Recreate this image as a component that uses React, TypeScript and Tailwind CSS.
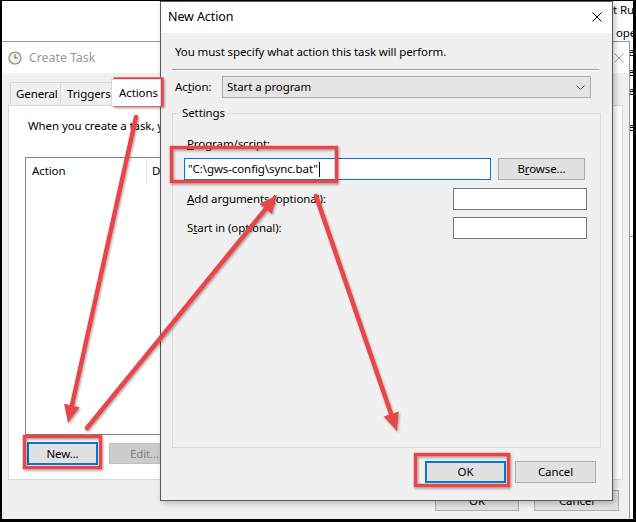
import React from 'react';

type Pt = { x1: number; y1: number; x2: number; y2: number };

const RED = '#e8474a';

// red arrow with a filled head at (x2, y2)
const Arrow: React.FC<Pt> = ({ x1, y1, x2, y2 }) => {
  const dx = x2 - x1;
  const dy = y2 - y1;
  const len = Math.hypot(dx, dy);
  const ux = dx / len;
  const uy = dy / len;
  const bx = x2 - ux * 18;
  const by = y2 - uy * 18;
  const nx = -uy * 8;
  const ny = ux * 8;
  return (
    <g>
      <line x1={x1} y1={y1} x2={bx + ux * 2} y2={by + uy * 2} stroke={RED} strokeWidth={4.5} strokeLinecap="round" />
      <polygon points={`${x2},${y2} ${bx + nx},${by + ny} ${bx - nx},${by - ny}`} fill={RED} />
    </g>
  );
};

const Annotations = () => (
  <svg className="pointer-events-none absolute left-0 top-0" width={636} height={522}>
    <defs>
      <filter id="sh" x="-20%" y="-20%" width="140%" height="140%">
        <feDropShadow dx="1" dy="1.5" stdDeviation="1.2" floodColor="#000" floodOpacity="0.35" />
      </filter>
    </defs>
    <g filter="url(#sh)" fill="none" stroke={RED} strokeWidth={3.5}>
      <rect x={115} y={79} width={47} height={26} />
      <rect x={171.5} y={147.5} width={165} height={34} />
      <rect x={24.5} y={436.5} width={76} height={31} />
      <rect x={415.5} y={454.5} width={93} height={31} />
    </g>
    <g filter="url(#sh)">
      <Arrow x1={136} y1={117} x2={68} y2={423} />
      <Arrow x1={87} y1={428} x2={277} y2={195} />
      <Arrow x1={316} y1={196} x2={397} y2={431} />
    </g>
  </svg>
);

const CloseX = ({ color = '#000' }: { color?: string }) => (
  <svg width="10" height="10" viewBox="0 0 10 10" className="shrink-0">
    <path d="M0.5 0.5 L9.5 9.5 M9.5 0.5 L0.5 9.5" stroke={color} strokeWidth="1" />
  </svg>
);

const ClockIcon = () => (
  <svg width="14" height="14" viewBox="0 0 14 14" className="shrink-0">
    <circle cx="7" cy="7" r="6" fill="#f3efe2" stroke="#8c8c8c" strokeWidth="1.2" />
    <path d="M7 3.2 V7 H10" stroke="#7a7a7a" strokeWidth="1.2" fill="none" />
  </svg>
);

const WinButton: React.FC<{ label: React.ReactNode; focused?: boolean; disabled?: boolean; className?: string }> = ({
  label,
  focused,
  disabled,
  className = '',
}) => (
  <div
    className={`flex items-center justify-center ${
      focused
        ? 'border-2 border-[#0078d7] bg-[#e1e1e1]'
        : disabled
          ? 'border border-[#bfbfbf] bg-[#cccccc] text-[#838383]'
          : 'border border-[#adadad] bg-[#e1e1e1]'
    } ${className}`}
  >
    {label}
  </div>
);

const BackWindow = () => (
  <div className="absolute inset-0 bg-white">
    <div className="absolute left-[613px] top-[2px] flex flex-col whitespace-nowrap">
      <span className="h-[16px]">t Run Time</span>
      <span className="ml-[3px] mt-[7px] h-[16px]">operties</span>
    </div>
    <div className="absolute left-[628px] top-[44px] flex flex-col whitespace-nowrap">
      <span className="h-[20px]">ew</span>
      <span className="h-[19px]">ew</span>
      <span className="h-[36px]">ew</span>
      <span className="h-[16px]">ew</span>
    </div>
    <div className="absolute left-[629px] top-[236px] h-px w-[8px] bg-[#a0a0a0]" />
  </div>
);

const CreateTaskWindow = () => (
  <div className="absolute left-[2px] top-[41px] flex h-[478px] w-[628px] flex-col border-r border-t border-[#9a9a9a] bg-[#f0f0f0]">
    <div className="flex h-[31px] shrink-0 items-center bg-white pl-[6px] pr-[5px]">
      <ClockIcon />
      <span className="ml-[7px] text-[12.5px] text-[#9a9a9a]">Create Task</span>
      <div className="ml-auto">
        <CloseX color="#9a9a9a" />
      </div>
    </div>

    <div className="flex h-[32px] shrink-0 items-end pl-[8px]">
      <div className="flex h-[23px] w-[51px] items-center border border-b-0 border-[#d9d9d9] bg-[#f0f0f0] pl-[5px]">General</div>
      <div className="flex h-[23px] w-[52px] items-center border border-b-0 border-l-0 border-[#d9d9d9] bg-[#f0f0f0] pl-[6px]">Triggers</div>
      <div className="relative z-10 -mb-px -ml-[2px] flex h-[27px] w-[50px] items-center border border-b-0 border-[#d9d9d9] bg-white pl-[7px]">
        Actions
      </div>
    </div>

    <div className="mx-[6px] flex h-[375px] shrink-0 flex-col border border-[#d9d9d9] bg-white pl-[16px] pr-[16px]">
      {/* the rest of this line sits under the New Action dialog */}
      <p className="ml-[3px] mt-[12px] w-[140px] overflow-hidden whitespace-nowrap">
        When you create a task, you must specify the action that will occur when your task starts.
      </p>
      <div className="mt-[23px] h-[278px] border border-[#828282] bg-white">
        <div className="flex h-[25px] items-center">
          <span className="w-[120px] pl-[6px]">Action</span>
          <div className="h-full w-px bg-[#e5e5e5]" />
          <span className="pl-[5px]">Details</span>
        </div>
      </div>
      <div className="mt-[7px] flex items-start">
        <WinButton label="New..." focused className="ml-[2px] h-[23px] w-[71px]" />
        <WinButton label="Edit..." disabled className="ml-[11px] mt-px h-[21px] w-[71px]" />
      </div>
    </div>

    <div className="mt-[10px] flex justify-end gap-[15px] pr-[10px]">
      <WinButton label="OK" className="h-[21px] w-[84px]" />
      <WinButton label="Cancel" className="h-[21px] w-[85px]" />
    </div>
  </div>
);

const NewActionDialog = () => (
  <div className="absolute left-[160px] top-[1px] flex h-[500px] w-[453px] flex-col border border-[#5a5a5a] bg-[#f0f0f0] shadow-[2px_2px_6px_rgba(0,0,0,0.25)]">
    <div className="flex h-[31px] shrink-0 items-center bg-white pb-[2px] pl-[7px] pr-[10px]">
      <span className="text-[12.5px]">New Action</span>
      <div className="ml-auto">
        <CloseX />
      </div>
    </div>

    <p className="ml-[14px] mt-[11px] whitespace-nowrap">You must specify what action this task will perform.</p>

    <div className="ml-[11px] mt-[9px] w-[427px] border-b border-t border-b-white border-t-[#a0a0a0]" />

    <div className="mt-[5px] flex items-center">
      <span className="ml-[14px] w-[47px]">
        Ac<span className="underline">t</span>ion:
      </span>
      <div className="flex h-[22px] w-[369px] items-center border border-[#adadad] bg-[#e5e5e5] pl-[4px] pr-[5px]">
        <span>Start a program</span>
        <svg width="9" height="5" viewBox="0 0 9 5" className="ml-auto">
          <path d="M0.5 0.5 L4.5 4.5 L8.5 0.5" stroke="#555" strokeWidth="1" fill="none" />
        </svg>
      </div>
    </div>

    <fieldset className="mx-[11px] mt-[7px] flex h-[343px] flex-col border border-[#dcdcdc] px-0 pb-0">
      <legend className="ml-[7px] px-[2px]">Settings</legend>

      <span className="ml-[14px] mt-[15px]">
        <span className="underline">P</span>rogram/script:
      </span>
      <div className="ml-[11px] mt-[6px] flex items-center">
        <div className="flex h-[22px] w-[307px] items-center border border-[#0078d7] bg-white pl-[3px]">
          <span className="whitespace-nowrap">"C:\gws-config\sync.bat"</span>
          <span className="ml-px h-[15px] w-px bg-black" />
        </div>
        <WinButton
          label={
            <span>
              B<span className="underline">r</span>owse...
            </span>
          }
          className="ml-[7px] h-[22px] w-[87px]"
        />
      </div>

      <div className="ml-[14px] mr-[13px] mt-[8px] flex items-center">
        <span>
          <span className="underline">A</span>dd arguments (optional):
        </span>
        <div className="ml-auto h-[22px] w-[134px] border border-[#7a7a7a] bg-white" />
      </div>

      <div className="ml-[14px] mr-[13px] mt-[7px] flex items-center">
        <span>
          S<span className="underline">t</span>art in (optional):
        </span>
        <div className="ml-auto h-[22px] w-[134px] border border-[#7a7a7a] bg-white" />
      </div>
    </fieldset>

    <div className="mt-[13px] flex justify-end gap-[9px] pr-[16px]">
      <WinButton label="OK" focused className="h-[22px] w-[81px]" />
      <WinButton label="Cancel" className="h-[22px] w-[81px]" />
    </div>
  </div>
);

export default function App() {
  return (
    <div className="relative h-[522px] w-[636px] overflow-hidden bg-white font-['Noto_Sans',sans-serif] text-[11.5px] leading-[16px] tracking-[-0.1px] text-black">
      <BackWindow />
      <CreateTaskWindow />
      <NewActionDialog />
      <Annotations />
      <div className="pointer-events-none absolute inset-0 border-b-[3px] border-l-2 border-r-[3px] border-t border-black" />
    </div>
  );
}
